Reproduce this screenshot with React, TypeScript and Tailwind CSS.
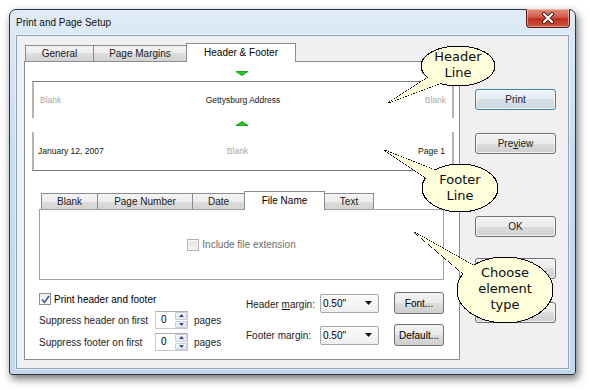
import React from "react";

const btnBg =
  "bg-[linear-gradient(#f2f2f2,#ebebeb_50%,#dddddd_50%,#cfcfcf)] border-[#707070]";
const tabBg = "bg-[linear-gradient(#f4f4f4,#ececec_50%,#dedede_50%,#d3d3d3)]";

function Button({ children, primary, className = "" }: { children?: React.ReactNode; primary?: boolean; className?: string }) {
  return (
    <div
      className={`flex h-[21px] w-[81px] items-center justify-center rounded-[3px] border text-[10px] text-[#1a1a1a] shadow-[inset_0_0_0_1px_rgba(255,255,255,0.7)] ${
        primary
          ? "border-[#3c7fb1] bg-[linear-gradient(#eef3f7,#e5ecf2_50%,#d6e0e8_50%,#cbd7e1)]"
          : btnBg
      } ${className}`}
    >
      {children}
    </div>
  );
}

function Tab({ label, active, className = "" }: { label: string; active?: boolean; className?: string }) {
  if (active) {
    return (
      <div
        className={`relative z-10 -mb-px flex h-[19px] items-center justify-center border border-b-0 border-[#898c95] bg-white pb-[2px] text-[10px] ${className}`}
      >
        {label}
      </div>
    );
  }
  return (
    <div
      className={`flex h-[16px] items-center justify-center border border-b-0 border-[#898c95] text-[10px] text-[#1a1a1a] ${tabBg} ${className}`}
    >
      {label}
    </div>
  );
}

function Marker({ up }: { up?: boolean }) {
  return (
    <svg width="14" height="5" viewBox="0 0 14 5">
      {up ? (
        <path d="M1 4.5 L7 0.5 L13 4.5 Z" fill="#18d418" stroke="#0a8a0a" strokeWidth="0.8" />
      ) : (
        <path d="M1 0.5 L7 4.5 L13 0.5 Z" fill="#18d418" stroke="#0a8a0a" strokeWidth="0.8" />
      )}
    </svg>
  );
}

function Spin() {
  return (
    <div className="flex h-[18px] w-[33px] border border-[#c5c8cf] border-t-[#abadb3] bg-white">
      <span className="flex-1 pl-[5px] text-[10px] leading-[16px]">0</span>
      <div className="flex w-[12px] flex-col gap-px">
        {[0, 1].map((i) => (
          <div
            key={i}
            className="flex flex-1 items-center justify-center rounded-[1px] border border-[#c6cdd6] bg-[linear-gradient(#f6f9fc,#dfe8f1)]"
          >
            <svg width="5" height="3" viewBox="0 0 5 3">
              <path d={i === 0 ? "M0 3 L2.5 0 L5 3 Z" : "M0 0 L2.5 3 L5 0 Z"} fill="#2d4f8f" />
            </svg>
          </div>
        ))}
      </div>
    </div>
  );
}

function Dropdown() {
  return (
    <div className="flex h-[19px] w-[59px] items-center justify-between rounded-[2px] border border-[#a5a5a5] bg-[linear-gradient(#fbfbfb,#efefef)] pl-[2px] pr-[6px] text-[10px]">
      <span>0.50"</span>
      <svg width="7" height="4" viewBox="0 0 7 4">
        <path d="M0 0 L7 0 L3.5 4 Z" fill="#111" />
      </svg>
    </div>
  );
}

export default function App() {
  return (
    <div className="relative h-[390px] w-[590px] overflow-hidden bg-white font-['Liberation_Sans',Arial,sans-serif] text-black">
      {/* Window frame */}
      <div className="ml-[9px] mt-[9px] flex h-[366px] w-[567px] flex-col rounded-t-[7px] rounded-b-[3px] border border-[#2b3645] bg-[linear-gradient(#dfebf7,#c9dcef_40%,#c3d8ee)] px-[6px] pb-[5px] shadow-[2px_4px_9px_rgba(0,0,0,0.55)]">
        {/* Title bar */}
        <div className="flex h-[25px] items-start justify-between">
          <div className="flex h-[25px] items-center text-[10px] text-[#111]">Print and Page Setup</div>
          <div className="-mr-px -mt-px flex h-[19px] w-[44px] items-center justify-center rounded-b-[4px] border border-t-0 border-[#5a1e1a] bg-[linear-gradient(#e0907e,#d05a46_45%,#c0321f_55%,#c8523a)] shadow-[inset_0_0_0_1px_rgba(255,220,210,0.5)]">
            <svg width="14" height="12" viewBox="0 0 14 12">
              <path d="M3 2 L11 10 M11 2 L3 10" stroke="#4a1a14" strokeWidth="4" strokeLinecap="round" />
              <path d="M3 2 L11 10 M11 2 L3 10" stroke="#ffffff" strokeWidth="2.2" strokeLinecap="round" />
            </svg>
          </div>
        </div>

        {/* Client area */}
        <div className="flex h-[334px] w-[553px] border border-[#8fa3ba] bg-[#f0f0f0] shadow-[0_0_0_1px_#e8f1fa]">
          {/* Left: tabs + panel */}
          <div className="flex flex-col pl-[7px] pt-[7px]">
            <div className="flex h-[18px] items-end pl-px">
              <Tab label="General" className="w-[69px]" />
              <Tab label="Page Margins" className="-ml-px w-[94px]" />
              <Tab label="Header & Footer" active className="-ml-px w-[110px]" />
            </div>
            <div className="flex h-[299px] w-[436px] flex-col border border-[#898c95] bg-white">
              <div className="mt-[9px] flex h-[4px] justify-center">
                <Marker />
              </div>

              {/* Header line preview */}
              <div className="ml-[7px] mt-[6px] grid h-[37px] w-[422px] grid-cols-[1fr_auto_1fr] items-center border-x-2 border-t border-x-[#b4b4b4] border-t-[#7a7a7a] px-[6px] text-[8.5px]">
                <span className="text-[#a9a9a9]">Blank</span>
                <span className="text-[#151515]">Gettysburg Address</span>
                <span className="text-right text-[#a9a9a9]">Blank</span>
              </div>
              <div className="mt-[3px] flex h-[4px] justify-center">
                <Marker up />
              </div>

              {/* Footer line preview */}
              <div className="ml-[7px] mt-[7px] grid h-[39px] w-[422px] grid-cols-[1fr_auto_1fr] items-center border-x-2 border-b border-x-[#b4b4b4] border-b-[#7a7a7a] pl-[4px] pr-[7px] text-[8.5px]">
                <span className="text-[#151515]">January 12, 2007</span>
                <span className="-ml-[8px] text-[#a9a9a9]">Blank</span>
                <span className="text-right text-[#151515]">Page 1</span>
              </div>

              {/* Element type tabs */}
              <div className="ml-[14px] mt-[20px] flex h-[18px] items-end pl-[2px]">
                <Tab label="Blank" className="w-[57px]" />
                <Tab label="Page Number" className="-ml-px w-[96px]" />
                <Tab label="Date" className="-ml-px w-[53px]" />
                <Tab label="File Name" active className="-ml-px w-[81px]" />
                <Tab label="Text" className="-ml-px w-[50px]" />
              </div>
              <div className="ml-[14px] flex h-[71px] w-[405px] items-center justify-center border border-[#a0a0a0] bg-white">
                <div className="flex items-center gap-[3px] text-[10px] text-[#6d6d6d]">
                  <div className="h-[12px] w-[12px] border border-[#b1b1b1] bg-[linear-gradient(#e4e4e4,#f4f4f4)] shadow-[inset_0_0_0_1px_#f8f8f8]" />
                  <span>Include file extension</span>
                </div>
              </div>

              {/* Options */}
              <div className="ml-[14px] mt-[13px] flex text-[10px]">
                <div className="flex w-[207px] flex-col">
                  <div className="flex h-[12px] items-center gap-[3px]">
                    <div className="flex h-[12px] w-[12px] items-center justify-center border border-[#8e8f8f] bg-[linear-gradient(#f0f0f0,#ffffff)]">
                      <svg width="9" height="9" viewBox="0 0 9 9">
                        <path d="M1 4.5 L3.5 7.5 L8 1" fill="none" stroke="#3b5a9a" strokeWidth="1.6" />
                      </svg>
                    </div>
                    <span>Print header and footer</span>
                  </div>
                  <div className="mt-[6px] flex h-[18px] items-center">
                    <span className="w-[116px] text-[#222]">Suppress header on first</span>
                    <Spin />
                    <span className="ml-[6px] text-[#222]">pages</span>
                  </div>
                  <div className="mt-[4px] flex h-[18px] items-center">
                    <span className="w-[116px] text-[#222]">Suppress footer on first</span>
                    <Spin />
                    <span className="ml-[6px] text-[#222]">pages</span>
                  </div>
                </div>
                <div className="-mt-px flex flex-col">
                  <div className="flex h-[22px] items-center">
                    <span className="w-[74px] pt-[3px] text-[#222]">
                      Header <u>m</u>argin:
                    </span>
                    <Dropdown />
                    <div className="ml-[15px] flex h-[22px] w-[50px] items-center justify-center rounded-[3px] border border-[#707070] bg-[linear-gradient(#f2f2f2,#ebebeb_50%,#dddddd_50%,#cfcfcf)] text-[10px]">
                      Font...
                    </div>
                  </div>
                  <div className="mt-[10px] flex h-[22px] items-center">
                    <span className="w-[74px] text-[#222]">Footer margin:</span>
                    <Dropdown />
                    <div className="ml-[15px] flex h-[22px] w-[50px] items-center justify-center rounded-[3px] border border-[#707070] bg-[linear-gradient(#f2f2f2,#ebebeb_50%,#dddddd_50%,#cfcfcf)] text-[10px]">
                      Default...
                    </div>
                  </div>
                </div>
              </div>
            </div>
          </div>

          {/* Right: command buttons (last two are hidden under the callout) */}
          <div className="ml-[15px] flex flex-col pt-[53px]">
            <Button primary>Print</Button>
            <Button className="mt-[23px]">
              Pre<u>v</u>iew
            </Button>
            <Button className="mt-[62px]">OK</Button>
            <Button className="mt-[21px]" />
            <Button className="mt-[23px]" />
          </div>
        </div>
      </div>

      {/* Callouts */}
      <svg className="pointer-events-none absolute left-0 top-0" width="590" height="390" viewBox="0 0 590 390" shapeRendering="crispEdges">
        <g fill="#ffffdc" stroke="#000" strokeWidth="1">
          <path d="M388 103 L430 76 L444 82 Z" />
          <ellipse cx="458" cy="66" rx="37" ry="20" />
          <path d="M388 103 L430 76 L444 82 Z" stroke="none" />

          <path d="M384 150 L440 172 L432 182 Z" />
          <ellipse cx="460" cy="188" rx="38" ry="24" />
          <path d="M384 150 L440 172 L432 182 Z" stroke="none" />

          <path d="M414 232 L478 268 L468 278 Z" />
          <ellipse cx="505" cy="290" rx="48" ry="33" />
          <path d="M414 232 L478 268 L468 278 Z" stroke="none" />
        </g>
      </svg>
      <div className="pointer-events-none absolute left-[421px] top-[49px] flex w-[74px] flex-col items-center font-['DejaVu_Sans',Verdana,sans-serif] text-[13px] leading-[16px] text-[#0c0c0c]">
        <span>Header</span>
        <span>Line</span>
      </div>
      <div className="pointer-events-none absolute left-[422px] top-[172px] flex w-[76px] flex-col items-center font-['DejaVu_Sans',Verdana,sans-serif] text-[13px] leading-[16px] text-[#0c0c0c]">
        <span>Footer</span>
        <span>Line</span>
      </div>
      <div className="pointer-events-none absolute left-[457px] top-[265px] flex w-[96px] flex-col items-center font-['DejaVu_Sans',Verdana,sans-serif] text-[13px] leading-[16px] text-[#0c0c0c]">
        <span>Choose</span>
        <span>element</span>
        <span>type</span>
      </div>
    </div>
  );
}
